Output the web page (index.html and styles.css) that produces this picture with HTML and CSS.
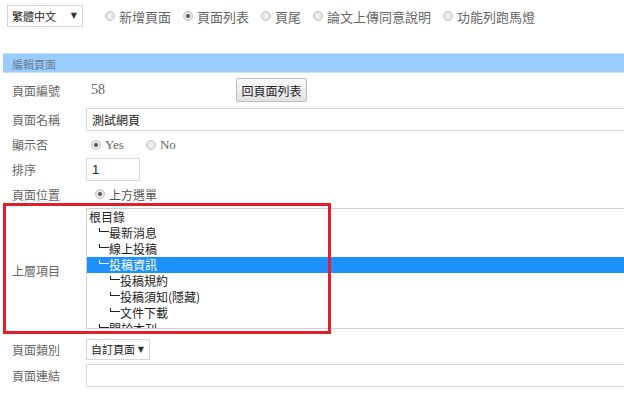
FILE: index.html
```html
<!DOCTYPE html>
<html lang="zh-Hant">
<head>
    <meta charset="UTF-8">
    <title>編輯頁面</title>
    <link rel="stylesheet" href="styles.css">
</head>
<body>

    <!-- Barra superior: idioma y tipo de página -->
    <div class="topbar">
        <div class="lang-select">繁體中文 <span class="arrow">▼</span></div>
        <div class="top-radios">
            <label class="top-radio"><span class="radio"></span>新增頁面</label>
            <label class="top-radio"><span class="radio checked"></span>頁面列表</label>
            <label class="top-radio"><span class="radio"></span>頁尾</label>
            <label class="top-radio"><span class="radio"></span>論文上傳同意說明</label>
            <label class="top-radio"><span class="radio"></span>功能列跑馬燈</label>
        </div>
    </div>

    <div class="panel">
        <div class="panel-title">編輯頁面</div>

        <div class="row row-id">
            <div class="label">頁面編號</div>
            <div class="field field-id">
                <span class="page-no">58</span>
                <button class="btn">回頁面列表</button>
            </div>
        </div>

        <div class="row row-input">
            <div class="label">頁面名稱</div>
            <div class="field"><div class="text-input">測試網頁</div></div>
        </div>

        <div class="row row-radio">
            <div class="label">顯示否</div>
            <div class="field serif">
                <span class="radio checked"></span><span class="opt">Yes</span>
                <span class="radio"></span><span class="opt">No</span>
            </div>
        </div>

        <div class="row row-input">
            <div class="label">排序</div>
            <div class="field"><div class="text-input short">1</div></div>
        </div>

        <div class="row row-pos">
            <div class="label">頁面位置</div>
            <div class="field"><span class="radio checked"></span><span class="opt">上方選單</span></div>
        </div>

        <!-- Lista de páginas padre (con marco rojo de anotación) -->
        <div class="row row-parent">
            <div class="label">上層項目</div>
            <div class="field">
                <div class="listbox">
                    <div class="item">根目錄</div>
                    <div class="item lvl1"><span class="branch"></span>最新消息</div>
                    <div class="item lvl1"><span class="branch"></span>線上投稿</div>
                    <div class="item lvl1 selected"><span class="branch"></span>投稿資訊</div>
                    <div class="item lvl2"><span class="branch"></span>投稿規約</div>
                    <div class="item lvl2"><span class="branch"></span>投稿須知(隱藏)</div>
                    <div class="item lvl2"><span class="branch"></span>文件下載</div>
                    <div class="item lvl1"><span class="branch"></span>關於本刊</div>
                </div>
            </div>
            <div class="red-mark"></div>
        </div>

        <div class="row row-type">
            <div class="label">頁面類別</div>
            <div class="field"><div class="type-select">自訂頁面 <span class="arrow">▼</span></div></div>
        </div>

        <div class="row row-input">
            <div class="label">頁面連結</div>
            <div class="field"><div class="text-input"></div></div>
        </div>
    </div>

</body>
</html>
```

FILE: styles.css
```css
/* Estilos generales */
* {
    box-sizing: border-box;
}

body {
    margin: 0;
    padding: 0;
    background-color: #fff;
    font-family: "Noto Sans CJK TC", "Noto Sans", sans-serif;
    font-size: 12px;
    color: #555;
    overflow: hidden;
    width: 624px;
    height: 393px;
}

.topbar {
    display: flex;
    padding: 5px 0 0 7px;
    height: 53px;
    align-items: flex-start;
}

.lang-select {
    width: 76px;
    height: 22px;
    border: 1px solid #d6d6d6;
    padding: 0 0 0 4px;
    line-height: 20px;
    font-size: 11px;
    color: #222;
    display: flex;
    justify-content: space-between;
    white-space: nowrap;
}

.arrow {
    font-size: 8px;
    color: #333;
    padding-right: 5px;
    font-family: "DejaVu Sans", sans-serif;
}

.top-radios {
    display: flex;
    margin-left: 22px;
    height: 22px;
    align-items: center;
    gap: 12px;
    font-size: 13px;
    color: #666;
}

.top-radio {
    display: flex;
    align-items: center;
}

/* Botones de radio al estilo antiguo */
.radio {
    display: inline-block;
    width: 10px;
    height: 10px;
    border-radius: 50%;
    border: 1px solid #c4c4c4;
    background: radial-gradient(circle, #f4f4f4 0%, #dcdcdc 100%);
    margin-right: 4px;
    position: relative;
    flex: none;
}

.radio.checked::after {
    content: "";
    position: absolute;
    left: 2px;
    top: 2px;
    width: 4px;
    height: 4px;
    border-radius: 50%;
    background-color: #555;
}

.panel {
    margin-left: 3px;
}

.panel-title {
    height: 20px;
    line-height: 20px;
    background-color: #9cf;
    border-top: 1px solid #c8e2ff;
    border-bottom: 1px solid #c8e2ff;
    padding-left: 9px;
    font-size: 11px;
    color: #6a7d93;
    margin-bottom: 1px;
}

.row {
    display: flex;
    align-items: center;
    position: relative;
}

.label {
    width: 83px;
    padding-left: 9px;
    flex: none;
    color: #666;
}

.field {
    flex: 1;
    display: flex;
    align-items: center;
}

.row-id {
    height: 32px;
}

.page-no {
    font-family: "Liberation Serif", serif;
    font-size: 14px;
    color: #666;
    margin-left: 5px;
    width: 145px;
}

.btn {
    width: 71px;
    height: 24px;
    border: 1px solid #bdbdbd;
    border-radius: 2px;
    background: linear-gradient(#fafafa, #e2e2e2);
    font-family: "Noto Sans CJK TC", sans-serif;
    font-size: 12px;
    color: #222;
    padding: 0;
}

.row-input {
    height: 27px;
}

.text-input {
    width: 560px;
    height: 23px;
    border: 1px solid #d9d9d9;
    border-right: none;
    padding-left: 5px;
    line-height: 21px;
    color: #222;
    font-size: 12px;
}

.text-input.short {
    width: 54px;
    border-right: 1px solid #d9d9d9;
    font-family: "Liberation Sans", sans-serif;
    font-size: 13px;
}

.row-radio {
    height: 23px;
}

.serif .opt {
    font-family: "Liberation Serif", serif;
    font-size: 13px;
    color: #666;
    margin-right: 17px;
}

.field .radio {
    margin-left: 5px;
}

.row-pos {
    height: 22px;
}

.row-pos .radio {
    margin-left: 9px;
}

.row-pos .opt {
    color: #555;
}

.row-parent {
    height: 130px;
}

.listbox {
    width: 560px;
    height: 121px;
    border: 1px solid #d0d0d0;
    border-right: none;
    overflow: hidden;
    color: #222;
    margin-top: -4px;
}

.item {
    height: 16px;
    line-height: 16px;
    padding-left: 2px;
    font-size: 12px;
    white-space: nowrap;
    display: flex;
    align-items: center;
}

.item.lvl1 {
    padding-left: 12px;
}

.item.lvl2 {
    padding-left: 23px;
}

/* Trazo de rama del árbol */
.branch {
    display: inline-block;
    width: 10px;
    height: 4px;
    border-left: 1px solid currentColor;
    border-bottom: 1px solid currentColor;
    margin-bottom: 5px;
}

.item.selected {
    background-color: #1e90ff;
    color: #fff;
}

/* Marco rojo de anotación sobre la fila */
.red-mark {
    position: absolute;
    left: 0;
    top: -2px;
    width: 328px;
    height: 131px;
    border: 3px solid #e01f2b;
    pointer-events: none;
}

.row-type {
    height: 25px;
    margin-top: 2px;
}

.type-select {
    width: 64px;
    height: 21px;
    border: 1px solid #d6d6d6;
    padding-left: 4px;
    line-height: 19px;
    font-size: 11px;
    color: #222;
    display: flex;
    justify-content: space-between;
    white-space: nowrap;
}
```
